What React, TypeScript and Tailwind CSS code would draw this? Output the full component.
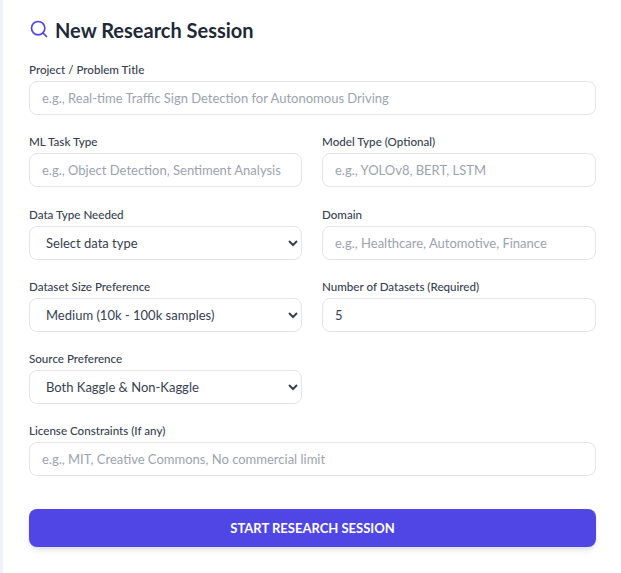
import React from 'react';
import { Search } from 'lucide-react';

const inputCls =
  'w-full h-[34px] px-[12px] bg-white border border-[#e2e4e9] rounded-lg text-[13px] text-[#374151] placeholder:text-[#9ca3af] outline-none';

const Label: React.FC<{ text: string }> = ({ text }) => (
  <label className="block h-[22px] text-[11.6px] leading-[22px] font-medium text-[#374151]">{text}</label>
);

const Field: React.FC<{ label: string; placeholder?: string; value?: string }> = ({ label, placeholder, value }) => (
  <div>
    <Label text={label} />
    <input className={inputCls} placeholder={placeholder} defaultValue={value} />
  </div>
);

const Select: React.FC<{ label: string; value: string }> = ({ label, value }) => (
  <div>
    <Label text={label} />
    <select className={inputCls} defaultValue={value}>
      <option>{value}</option>
    </select>
  </div>
);

const App: React.FC = () => {
  return (
    <div className="h-[573px] overflow-hidden bg-white font-['Lato',sans-serif] border-l-[3px] border-[#f0f3f8]">
      <div className="pl-[26px] pr-[25px] pt-[17px]">
        <div className="flex items-center gap-[6px] h-[26px] mb-[16px]">
          <Search className="w-[20px] h-[20px] text-[#4f46e5] -mt-[2px]" strokeWidth={2} />
          <h2 className="text-[20px] font-bold text-[#1f2937]">New Research Session</h2>
        </div>

        <form className="flex flex-col gap-[16.3px]">
          <Field label="Project / Problem Title" placeholder="e.g., Real-time Traffic Sign Detection for Autonomous Driving" />
          <div className="grid grid-cols-[273px_274px] gap-x-[20px] gap-y-[16.3px]">
            <Field label="ML Task Type" placeholder="e.g., Object Detection, Sentiment Analysis" />
            <Field label="Model Type (Optional)" placeholder="e.g., YOLOv8, BERT, LSTM" />
            <Select label="Data Type Needed" value="Select data type" />
            <Field label="Domain" placeholder="e.g., Healthcare, Automotive, Finance" />
            <Select label="Dataset Size Preference" value="Medium (10k - 100k samples)" />
            <Field label="Number of Datasets (Required)" value="5" />
            <Select label="Source Preference" value="Both Kaggle & Non-Kaggle" />
          </div>
          <Field label="License Constraints (If any)" placeholder="e.g., MIT, Creative Commons, No commercial limit" />
          <button
            type="button"
            className="mt-[16px] h-[38px] w-full pt-[1px] rounded-lg bg-[#4f46e5] text-white text-[13px] font-bold shadow-md"
          >
            START RESEARCH SESSION
          </button>
        </form>
      </div>
    </div>
  );
};

export default App;
